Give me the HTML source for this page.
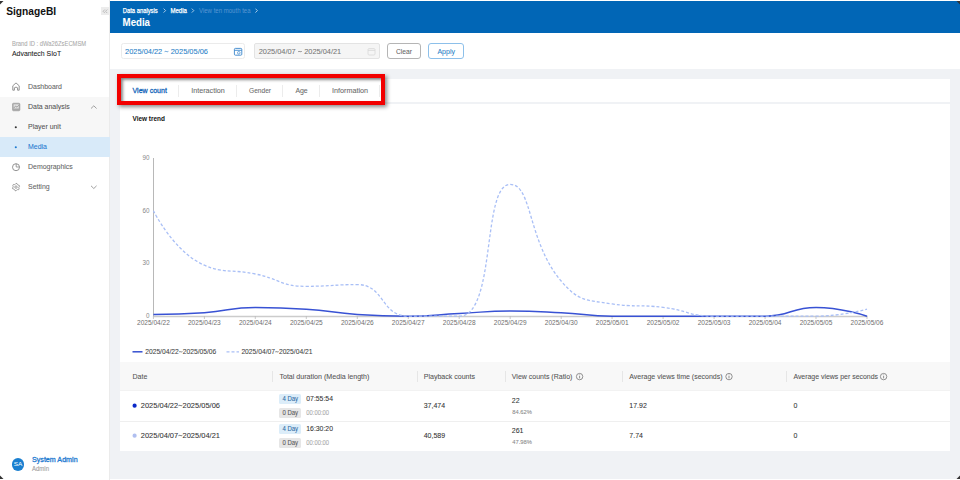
<!DOCTYPE html>
<html><head><meta charset="utf-8">
<style>
*{margin:0;padding:0;box-sizing:border-box}
html,body{width:960px;height:480px;overflow:hidden;background:#fff;font-family:"Liberation Sans",sans-serif;color:#333}
#side{position:absolute;left:0;top:0;width:110px;height:480px;background:#fff;border-right:1px solid #e8e8e8}
#main{position:absolute;left:110px;top:0;width:850px;height:480px;background:#f0f2f5}
#hdr{position:absolute;left:110px;top:1px;width:850px;height:31px;background:#0166b6}
#filt{position:absolute;left:110px;top:32px;width:850px;height:37px;background:#fff}
.card{position:absolute;background:#fff}
.t{position:absolute;white-space:nowrap;line-height:1}
svg text{font-family:"Liberation Sans",sans-serif}
</style></head><body>
<div style="position:absolute;left:0px;top:0px;width:110px;height:480px;background:#fff;border-right:1px solid #ebebeb"></div>
<div style="position:absolute;left:110px;top:1px;width:850px;height:478px;background:#f0f2f5;"></div>
<div style="position:absolute;left:110px;top:1px;width:850px;height:32px;background:#0166b6;"></div>
<div style="position:absolute;left:110px;top:33px;width:850px;height:36px;background:#fff;"></div>
<div style="position:absolute;left:0px;top:97px;width:109px;height:40px;background:#f7f7f7;"></div>
<div style="position:absolute;left:0px;top:137px;width:110px;height:20px;background:#d8eaf9;"></div>
<div style="position:absolute;left:101.2px;top:7px;width:7.6px;height:8.1px;background:#ececec;"></div>
<div style="position:absolute;left:12px;top:458.4px;width:12.2px;height:12.2px;background:#1a7fd0;border-radius:50%"></div>
<div style="position:absolute;left:121.3px;top:43.4px;width:124px;height:15.2px;background:#fff;border:1px solid #ebebeb;border-radius:2.5px"></div>
<div style="position:absolute;left:254px;top:43px;width:125.5px;height:16px;background:#f5f5f5;border:1px solid #e3e3e3;border-radius:2px"></div>
<div style="position:absolute;left:387.3px;top:43.2px;width:33.6px;height:16px;background:#fff;border:1.2px solid #b5b5b5;border-radius:3px"></div>
<div style="position:absolute;left:428.4px;top:43px;width:35.4px;height:16px;background:#fff;border:1.2px solid #8dc0ea;border-radius:3px"></div>
<div style="position:absolute;left:120px;top:79px;width:830px;height:23px;background:#fff;"></div>
<div style="position:absolute;left:120px;top:104px;width:830px;height:347px;background:#fff;"></div>
<div style="position:absolute;left:120px;top:362px;width:830px;height:28px;background:#f8f8f8;"></div>
<div style="position:absolute;left:120px;top:390px;width:830px;height:1px;background:#f2f2f2;"></div>
<div style="position:absolute;left:120px;top:420.5px;width:830px;height:1px;background:#efefef;"></div>
<div style="position:absolute;left:272.0px;top:371px;width:1px;height:11px;background:#e6e6e6;"></div>
<div style="position:absolute;left:416.5px;top:371px;width:1px;height:11px;background:#e6e6e6;"></div>
<div style="position:absolute;left:505.0px;top:371px;width:1px;height:11px;background:#e6e6e6;"></div>
<div style="position:absolute;left:622.3px;top:371px;width:1px;height:11px;background:#e6e6e6;"></div>
<div style="position:absolute;left:786.3px;top:371px;width:1px;height:11px;background:#e6e6e6;"></div>
<div style="position:absolute;left:178.0px;top:85.4px;width:1px;height:11.2px;background:#ececec;"></div>
<div style="position:absolute;left:236.0px;top:85.4px;width:1px;height:11.2px;background:#ececec;"></div>
<div style="position:absolute;left:282.3px;top:85.4px;width:1px;height:11.2px;background:#ececec;"></div>
<div style="position:absolute;left:318.9px;top:85.4px;width:1px;height:11.2px;background:#ececec;"></div>
<div style="position:absolute;left:379.0px;top:85.4px;width:1px;height:11.2px;background:#ececec;"></div>
<div style="position:absolute;left:279.25px;top:394.25px;width:22px;height:9.5px;background:#dcedf9;border-radius:1.5px"></div>
<div style="position:absolute;left:279.25px;top:408px;width:22px;height:9.5px;background:#e6e6e6;border-radius:1.5px"></div>
<div style="position:absolute;left:279.25px;top:424.25px;width:22px;height:9.5px;background:#dcedf9;border-radius:1.5px"></div>
<div style="position:absolute;left:279.25px;top:438px;width:22px;height:9.5px;background:#e6e6e6;border-radius:1.5px"></div>
<svg style="position:absolute;left:0;top:0" width="960" height="480" viewBox="0 0 960 480">
<text x="6.20" y="15" font-size="10.6" fill="#111" font-weight="bold"  textLength="50" lengthAdjust="spacingAndGlyphs">SignageBI</text>
<path d="M104.9 9.5 L103.1 11.3 L104.9 13.1 M107.3 9.5 L105.5 11.3 L107.3 13.1" fill="none" stroke="#a0a0a0" stroke-width="0.65"/>
<text x="12.00" y="46" font-size="6.4" fill="#aaaaaa" stroke="#aaaaaa" stroke-width="0.07"  textLength="74.2" lengthAdjust="spacingAndGlyphs">Brand ID : dWa26ZsECMSM</text>
<text x="12.00" y="56" font-size="7.45" fill="#222" stroke="#222" stroke-width="0.07"  textLength="49.1" lengthAdjust="spacingAndGlyphs">Advantech SIoT</text>
<text x="28.00" y="89" font-size="7.51" fill="#666" stroke="#666" stroke-width="0.07"  textLength="34.0" lengthAdjust="spacingAndGlyphs">Dashboard</text>
<text x="28.00" y="109" font-size="7.51" fill="#555" stroke="#555" stroke-width="0.07"  textLength="41.72" lengthAdjust="spacingAndGlyphs">Data analysis</text>
<text x="28.00" y="129" font-size="7.51" fill="#555" stroke="#555" stroke-width="0.07"  textLength="32.84" lengthAdjust="spacingAndGlyphs">Player unit</text>
<text x="28.00" y="149" font-size="7.51" fill="#1f7ad0" stroke="#1f7ad0" stroke-width="0.07"  textLength="18.93" lengthAdjust="spacingAndGlyphs">Media</text>
<text x="28.00" y="169" font-size="7.51" fill="#666" stroke="#666" stroke-width="0.07"  textLength="44.81" lengthAdjust="spacingAndGlyphs">Demographics</text>
<text x="28.00" y="189" font-size="7.51" fill="#666" stroke="#666" stroke-width="0.07"  textLength="21.64" lengthAdjust="spacingAndGlyphs">Setting</text>
<path d="M12.8 90.2 V85.8 L16 82.9 L19.2 85.8 V90.2 H17.6 V87.8 Q16 86.4 14.4 87.8 V90.2 Z" fill="none" stroke="#888" stroke-width="0.9" stroke-linejoin="round"/>
<rect x="12.5" y="103.2" width="7.4" height="7.6" rx="1" fill="#a8a8a8" stroke="#999" stroke-width="0.6"/>
<rect x="13.6" y="104.3" width="5.2" height="4.2" fill="#e0e0e0"/>
<path d="M13.8 108 L15.6 106 L17 107.2 L18.8 105.2" fill="none" stroke="#888" stroke-width="0.7"/>
<path d="M91 108.5 L93.8 105.8 L96.6 108.5" fill="none" stroke="#888" stroke-width="0.8"/>
<circle cx="15.8" cy="127.2" r="1.05" fill="#333"/>
<circle cx="15.8" cy="147.2" r="1.05" fill="#1f7ad0"/>
<circle cx="16" cy="167.2" r="3.5" fill="none" stroke="#888" stroke-width="0.9"/>
<path d="M16.2 163.8 V167 H19.6" fill="none" stroke="#888" stroke-width="0.8"/>
<circle cx="16" cy="187.1" r="1.2" fill="none" stroke="#888" stroke-width="0.8"/>
<path d="M16.00 183.40 L16.96 183.53 L17.45 184.59 L18.05 185.05 L19.20 185.25 L19.57 186.14 L18.90 187.10 L18.80 187.85 L19.20 188.95 L18.62 189.72 L17.45 189.61 L16.75 189.90 L16.00 190.80 L15.04 190.67 L14.55 189.61 L13.95 189.15 L12.80 188.95 L12.43 188.06 L13.10 187.10 L13.20 186.35 L12.80 185.25 L13.38 184.48 L14.55 184.59 L15.25 184.30 Z" fill="none" stroke="#888" stroke-width="0.8" stroke-linejoin="round"/>
<path d="M91 185.8 L93.8 188.5 L96.6 185.8" fill="none" stroke="#888" stroke-width="0.8"/>
<text x="13.70" y="466" font-size="5.6" fill="#fff"  textLength="8.6" lengthAdjust="spacingAndGlyphs">SA</text>
<text x="32.00" y="462" font-size="7.1" fill="#1f7ad0" stroke="#1f7ad0" stroke-width="0.3"  textLength="45.6" lengthAdjust="spacingAndGlyphs">System Admin</text>
<text x="32.00" y="471" font-size="6.48" fill="#999" stroke="#999" stroke-width="0.07"  textLength="17.01" lengthAdjust="spacingAndGlyphs">Admin</text>
<text x="122.75" y="13" font-size="6.9" fill="#fff" stroke="#fff" stroke-width="0.25"  textLength="35" lengthAdjust="spacingAndGlyphs">Data analysis</text>
<path d="M163.6 8.6 L165.6 10.6 L163.6 12.6 M191.8 8.6 L193.8 10.6 L191.8 12.6 M255.4 8.6 L257.4 10.6 L255.4 12.6" fill="none" stroke="#d0e2f3" stroke-width="0.8"/>
<text x="170.40" y="13" font-size="6.9" fill="#fff" stroke="#fff" stroke-width="0.25"  textLength="16.5" lengthAdjust="spacingAndGlyphs">Media</text>
<text x="199.00" y="13" font-size="6.52" fill="#5a96d2"  textLength="51.6" lengthAdjust="spacingAndGlyphs">View ten mouth tea</text>
<text x="122.60" y="26" font-size="10.44" fill="#fff" stroke="#fff" stroke-width="0.07" font-weight="bold"  textLength="27.41" lengthAdjust="spacingAndGlyphs">Media</text>
<text x="125.00" y="54" font-size="8.04" fill="#2a7fc8" stroke="#2a7fc8" stroke-width="0.07"  textLength="37.26" lengthAdjust="spacingAndGlyphs">2025/04/22</text>
<text x="170.74" y="54" font-size="8.04" fill="#2a7fc8" stroke="#2a7fc8" stroke-width="0.07"  textLength="37.26" lengthAdjust="spacingAndGlyphs">2025/05/06</text>
<path d="M164.64 51.71 C165.66 50.66 167.34 52.42 168.36 51.38" fill="none" stroke="#2a7fc8" stroke-width="0.75"/>
<rect x="234.4" y="48.4" width="7.4" height="6.8" rx="1" fill="none" stroke="#3a86cc" stroke-width="0.9"/>
<line x1="234.4" y1="50.3" x2="241.8" y2="50.3" stroke="#3a86cc" stroke-width="0.9"/>
<circle cx="238.8" cy="52.8" r="1.3" fill="none" stroke="#3a86cc" stroke-width="0.7"/>
<rect x="368" y="48.6" width="7" height="6.4" rx="1" fill="none" stroke="#d8d8d8" stroke-width="0.8"/>
<line x1="368" y1="50.4" x2="375" y2="50.4" stroke="#d8d8d8" stroke-width="0.8"/>
<text x="258.70" y="54" font-size="7.99" fill="#777" stroke="#777" stroke-width="0.07"  textLength="37.03" lengthAdjust="spacingAndGlyphs">2025/04/07</text>
<text x="304.17" y="54" font-size="7.99" fill="#777" stroke="#777" stroke-width="0.07"  textLength="37.03" lengthAdjust="spacingAndGlyphs">2025/04/21</text>
<path d="M298.10 51.72 C299.12 50.68 300.78 52.44 301.80 51.39" fill="none" stroke="#777" stroke-width="0.75"/>
<text x="396.00" y="54" font-size="7.24" fill="#666" stroke="#666" stroke-width="0.07"  textLength="16.01" lengthAdjust="spacingAndGlyphs">Clear</text>
<text x="437.40" y="54" font-size="7.6" fill="#2a7fc8" stroke="#2a7fc8" stroke-width="0.07"  textLength="17.61" lengthAdjust="spacingAndGlyphs">Apply</text>
<text x="132.50" y="93" font-size="7.62" fill="#0f63b8" stroke="#0f63b8" stroke-width="0.28"  textLength="34.41" lengthAdjust="spacingAndGlyphs">View count</text>
<text x="191.25" y="93" font-size="7.74" fill="#6a6a6a" stroke="#6a6a6a" stroke-width="0.07"  textLength="33.48" lengthAdjust="spacingAndGlyphs">Interaction</text>
<text x="249.00" y="93" font-size="7.13" fill="#6a6a6a" stroke="#6a6a6a" stroke-width="0.07"  textLength="22.01" lengthAdjust="spacingAndGlyphs">Gender</text>
<text x="295.40" y="93" font-size="7.5" fill="#6a6a6a" stroke="#6a6a6a" stroke-width="0.07"  textLength="12.35" lengthAdjust="spacingAndGlyphs">Age</text>
<text x="332.00" y="93" font-size="7.8" fill="#6a6a6a" stroke="#6a6a6a" stroke-width="0.07"  textLength="36.12" lengthAdjust="spacingAndGlyphs">Information</text>
<text x="132.50" y="121" font-size="6.9" fill="#111" font-weight="bold"  textLength="32.5" lengthAdjust="spacingAndGlyphs">View trend</text>
<line x1="153.5" y1="158" x2="153.5" y2="317" stroke="#b8b8b8" stroke-width="1"/>
<line x1="153" y1="316.5" x2="867.5" y2="316.5" stroke="#cccccc" stroke-width="1.5"/>
<line x1="153.4" y1="316" x2="153.4" y2="319" stroke="#bbb" stroke-width="0.8"/>
<text x="153.40" y="325" font-size="7.07" fill="#6f6f6f" text-anchor="middle" textLength="32.78" lengthAdjust="spacingAndGlyphs">2025/04/22</text>
<line x1="204.4" y1="316" x2="204.4" y2="319" stroke="#bbb" stroke-width="0.8"/>
<text x="204.37" y="325" font-size="7.07" fill="#6f6f6f" text-anchor="middle" textLength="32.78" lengthAdjust="spacingAndGlyphs">2025/04/23</text>
<line x1="255.3" y1="316" x2="255.3" y2="319" stroke="#bbb" stroke-width="0.8"/>
<text x="255.34" y="325" font-size="7.07" fill="#6f6f6f" text-anchor="middle" textLength="32.78" lengthAdjust="spacingAndGlyphs">2025/04/24</text>
<line x1="306.3" y1="316" x2="306.3" y2="319" stroke="#bbb" stroke-width="0.8"/>
<text x="306.31" y="325" font-size="7.07" fill="#6f6f6f" text-anchor="middle" textLength="32.78" lengthAdjust="spacingAndGlyphs">2025/04/25</text>
<line x1="357.3" y1="316" x2="357.3" y2="319" stroke="#bbb" stroke-width="0.8"/>
<text x="357.29" y="325" font-size="7.07" fill="#6f6f6f" text-anchor="middle" textLength="32.78" lengthAdjust="spacingAndGlyphs">2025/04/26</text>
<line x1="408.3" y1="316" x2="408.3" y2="319" stroke="#bbb" stroke-width="0.8"/>
<text x="408.26" y="325" font-size="7.07" fill="#6f6f6f" text-anchor="middle" textLength="32.78" lengthAdjust="spacingAndGlyphs">2025/04/27</text>
<line x1="459.2" y1="316" x2="459.2" y2="319" stroke="#bbb" stroke-width="0.8"/>
<text x="459.23" y="325" font-size="7.07" fill="#6f6f6f" text-anchor="middle" textLength="32.78" lengthAdjust="spacingAndGlyphs">2025/04/28</text>
<line x1="510.2" y1="316" x2="510.2" y2="319" stroke="#bbb" stroke-width="0.8"/>
<text x="510.20" y="325" font-size="7.07" fill="#6f6f6f" text-anchor="middle" textLength="32.78" lengthAdjust="spacingAndGlyphs">2025/04/29</text>
<line x1="561.2" y1="316" x2="561.2" y2="319" stroke="#bbb" stroke-width="0.8"/>
<text x="561.17" y="325" font-size="7.07" fill="#6f6f6f" text-anchor="middle" textLength="32.78" lengthAdjust="spacingAndGlyphs">2025/04/30</text>
<line x1="612.1" y1="316" x2="612.1" y2="319" stroke="#bbb" stroke-width="0.8"/>
<text x="612.14" y="325" font-size="7.07" fill="#6f6f6f" text-anchor="middle" textLength="32.78" lengthAdjust="spacingAndGlyphs">2025/05/01</text>
<line x1="663.1" y1="316" x2="663.1" y2="319" stroke="#bbb" stroke-width="0.8"/>
<text x="663.11" y="325" font-size="7.07" fill="#6f6f6f" text-anchor="middle" textLength="32.78" lengthAdjust="spacingAndGlyphs">2025/05/02</text>
<line x1="714.1" y1="316" x2="714.1" y2="319" stroke="#bbb" stroke-width="0.8"/>
<text x="714.09" y="325" font-size="7.07" fill="#6f6f6f" text-anchor="middle" textLength="32.78" lengthAdjust="spacingAndGlyphs">2025/05/03</text>
<line x1="765.1" y1="316" x2="765.1" y2="319" stroke="#bbb" stroke-width="0.8"/>
<text x="765.06" y="325" font-size="7.07" fill="#6f6f6f" text-anchor="middle" textLength="32.78" lengthAdjust="spacingAndGlyphs">2025/05/04</text>
<line x1="816.0" y1="316" x2="816.0" y2="319" stroke="#bbb" stroke-width="0.8"/>
<text x="816.03" y="325" font-size="7.07" fill="#6f6f6f" text-anchor="middle" textLength="32.78" lengthAdjust="spacingAndGlyphs">2025/05/05</text>
<line x1="867.0" y1="316" x2="867.0" y2="319" stroke="#bbb" stroke-width="0.8"/>
<text x="867.00" y="325" font-size="7.07" fill="#6f6f6f" text-anchor="middle" textLength="32.78" lengthAdjust="spacingAndGlyphs">2025/05/06</text>
<text x="149.5" y="318" text-anchor="end" font-size="6.3" fill="#888">0</text>
<text x="149.5" y="265" text-anchor="end" font-size="6.3" fill="#888">30</text>
<text x="149.5" y="213" text-anchor="end" font-size="6.3" fill="#888">60</text>
<text x="149.5" y="160" text-anchor="end" font-size="6.3" fill="#888">90</text>
<path d="M153.40,314.44 C153.40,314.44 178.95,314.44 204.37,312.68 C229.92,310.92 229.80,307.41 255.34,307.41 C280.77,307.41 280.89,307.42 306.31,309.17 C331.86,310.93 331.74,312.68 357.29,314.44 C382.71,316.20 382.78,316.20 408.26,316.20 C433.75,316.20 433.74,314.88 459.23,313.56 C484.71,312.25 484.70,310.93 510.20,310.93 C535.68,310.93 535.71,311.37 561.17,312.68 C586.68,314.00 586.63,316.20 612.14,316.20 C637.60,316.20 637.63,316.20 663.11,316.20 C688.60,316.20 688.60,316.20 714.09,316.20 C739.57,316.20 739.76,316.20 765.06,316.20 C790.73,316.20 790.54,307.41 816.03,307.41 C841.51,307.41 867.00,316.20 867.00,316.20" fill="none" stroke="#3852d4" stroke-width="1.5"/>
<path d="M153.40,210.73 C153.40,210.73 174.27,252.55 204.37,265.22 C225.24,274.01 230.03,268.78 255.34,274.01 C281.00,279.32 280.48,286.32 306.31,286.32 C331.45,286.32 333.86,284.56 357.29,284.56 C384.84,284.56 380.70,316.20 408.26,316.20 C431.67,316.20 445.72,316.20 459.23,316.20 C496.69,316.20 481.46,184.37 510.20,184.37 C532.43,184.37 527.44,241.49 561.17,281.04 C578.41,301.26 585.52,300.05 612.14,303.90 C636.49,307.41 637.79,304.35 663.11,307.41 C688.76,310.51 688.41,316.20 714.09,316.20 C739.38,316.20 739.57,316.20 765.06,316.20 C790.54,316.20 790.66,316.20 816.03,316.20 C841.63,316.20 867.00,309.17 867.00,309.17" fill="none" stroke="#a9bff6" stroke-width="1.3" stroke-dasharray="3 2"/>
<line x1="132.5" y1="351.8" x2="142.5" y2="351.8" stroke="#3550d0" stroke-width="1.5"/>
<text x="145.20" y="354" font-size="7.25" fill="#444" stroke="#444" stroke-width="0.07"  textLength="33.59" lengthAdjust="spacingAndGlyphs">2025/04/22</text>
<text x="182.71" y="354" font-size="7.25" fill="#444" stroke="#444" stroke-width="0.07"  textLength="33.59" lengthAdjust="spacingAndGlyphs">2025/05/06</text>
<path d="M179.05 351.92 C179.99 351.07 181.51 352.51 182.45 351.65" fill="none" stroke="#444" stroke-width="0.65"/>
<line x1="226.5" y1="351.8" x2="239" y2="351.8" stroke="#aac0f6" stroke-width="1.3" stroke-dasharray="3 2"/>
<text x="241.40" y="354" font-size="7.25" fill="#444" stroke="#444" stroke-width="0.07"  textLength="33.59" lengthAdjust="spacingAndGlyphs">2025/04/07</text>
<text x="278.91" y="354" font-size="7.25" fill="#444" stroke="#444" stroke-width="0.07"  textLength="33.59" lengthAdjust="spacingAndGlyphs">2025/04/21</text>
<path d="M275.25 351.92 C276.19 351.07 277.71 352.51 278.65 351.65" fill="none" stroke="#444" stroke-width="0.65"/>
<text x="132.50" y="379" font-size="7.56" fill="#555" stroke="#555" stroke-width="0.07"  textLength="14.79" lengthAdjust="spacingAndGlyphs">Date</text>
<text x="279.40" y="379" font-size="7.67" fill="#555" stroke="#555" stroke-width="0.07"  textLength="89.99" lengthAdjust="spacingAndGlyphs">Total duration (Media length)</text>
<text x="423.70" y="379" font-size="7.61" fill="#555" stroke="#555" stroke-width="0.07"  textLength="51.34" lengthAdjust="spacingAndGlyphs">Playback counts</text>
<text x="511.80" y="379" font-size="7.56" fill="#555" stroke="#555" stroke-width="0.07"  textLength="60.56" lengthAdjust="spacingAndGlyphs">View counts (Ratio)</text>
<text x="629.30" y="379" font-size="7.56" fill="#555" stroke="#555" stroke-width="0.07"  textLength="93.24" lengthAdjust="spacingAndGlyphs">Average views time (seconds)</text>
<text x="793.40" y="379" font-size="7.48" fill="#555" stroke="#555" stroke-width="0.07"  textLength="84.62" lengthAdjust="spacingAndGlyphs">Average views per seconds</text>
<circle cx="579.6" cy="376.6" r="3.2" fill="none" stroke="#777" stroke-width="0.8"/><line x1="579.6" y1="375.8" x2="579.6" y2="378.4" stroke="#666" stroke-width="0.7"/><circle cx="579.6" cy="374.8" r="0.4" fill="#666"/>
<circle cx="729" cy="376.6" r="3.2" fill="none" stroke="#777" stroke-width="0.8"/><line x1="729" y1="375.8" x2="729" y2="378.4" stroke="#666" stroke-width="0.7"/><circle cx="729" cy="374.8" r="0.4" fill="#666"/>
<circle cx="883.6" cy="376.6" r="3.2" fill="none" stroke="#777" stroke-width="0.8"/><line x1="883.6" y1="375.8" x2="883.6" y2="378.4" stroke="#666" stroke-width="0.7"/><circle cx="883.6" cy="374.8" r="0.4" fill="#666"/>
<circle cx="134.6" cy="405.7" r="2.1" fill="#0a28c8"/>
<text x="140.75" y="408" font-size="8.08" fill="#333" stroke="#333" stroke-width="0.07"  textLength="37.44" lengthAdjust="spacingAndGlyphs">2025/04/22</text>
<text x="182.56" y="408" font-size="8.08" fill="#333" stroke="#333" stroke-width="0.07"  textLength="37.44" lengthAdjust="spacingAndGlyphs">2025/05/06</text>
<path d="M178.47 405.68 C179.52 404.73 181.23 406.33 182.28 405.38" fill="none" stroke="#333" stroke-width="0.7"/>
<text x="282.45" y="401" font-size="6.48" fill="#2b6aa3" stroke="#2b6aa3" stroke-width="0.07"  textLength="15.67" lengthAdjust="spacingAndGlyphs">4 Day</text>
<text x="282.45" y="415" font-size="6.48" fill="#555" stroke="#555" stroke-width="0.07"  textLength="15.67" lengthAdjust="spacingAndGlyphs">0 Day</text>
<text x="306.25" y="401" font-size="7.42" fill="#333" stroke="#333" stroke-width="0.07"  textLength="26.74" lengthAdjust="spacingAndGlyphs">07:55:54</text>
<text x="306.25" y="415" font-size="6.32" fill="#aaa" stroke="#aaa" stroke-width="0.07"  textLength="22.77" lengthAdjust="spacingAndGlyphs">00:00:00</text>
<text x="423.70" y="408" font-size="7.56" fill="#333" stroke="#333" stroke-width="0.07"  textLength="21.41" lengthAdjust="spacingAndGlyphs">37,474</text>
<text x="511.80" y="403" font-size="7.56" fill="#333" stroke="#333" stroke-width="0.07"  textLength="7.79" lengthAdjust="spacingAndGlyphs">22</text>
<text x="512.20" y="414" font-size="6.26" fill="#888" stroke="#888" stroke-width="0.07"  textLength="19.67" lengthAdjust="spacingAndGlyphs">84.62%</text>
<text x="629.30" y="408" font-size="7.56" fill="#333" stroke="#333" stroke-width="0.07"  textLength="17.52" lengthAdjust="spacingAndGlyphs">17.92</text>
<text x="793.40" y="408" font-size="7.56" fill="#333" stroke="#333" stroke-width="0.07"  textLength="3.89" lengthAdjust="spacingAndGlyphs">0</text>
<circle cx="134.6" cy="435.7" r="2.1" fill="#b0bff0"/>
<text x="140.75" y="438" font-size="8.08" fill="#333" stroke="#333" stroke-width="0.07"  textLength="37.44" lengthAdjust="spacingAndGlyphs">2025/04/07</text>
<text x="182.56" y="438" font-size="8.08" fill="#333" stroke="#333" stroke-width="0.07"  textLength="37.44" lengthAdjust="spacingAndGlyphs">2025/04/21</text>
<path d="M178.47 435.68 C179.52 434.73 181.23 436.33 182.28 435.38" fill="none" stroke="#333" stroke-width="0.7"/>
<text x="282.45" y="431" font-size="6.48" fill="#2b6aa3" stroke="#2b6aa3" stroke-width="0.07"  textLength="15.67" lengthAdjust="spacingAndGlyphs">4 Day</text>
<text x="282.45" y="445" font-size="6.48" fill="#555" stroke="#555" stroke-width="0.07"  textLength="15.67" lengthAdjust="spacingAndGlyphs">0 Day</text>
<text x="306.25" y="431" font-size="7.42" fill="#333" stroke="#333" stroke-width="0.07"  textLength="26.74" lengthAdjust="spacingAndGlyphs">16:30:20</text>
<text x="306.25" y="445" font-size="6.32" fill="#aaa" stroke="#aaa" stroke-width="0.07"  textLength="22.77" lengthAdjust="spacingAndGlyphs">00:00:00</text>
<text x="423.70" y="438" font-size="7.56" fill="#333" stroke="#333" stroke-width="0.07"  textLength="21.41" lengthAdjust="spacingAndGlyphs">40,589</text>
<text x="511.80" y="433" font-size="7.56" fill="#333" stroke="#333" stroke-width="0.07"  textLength="11.68" lengthAdjust="spacingAndGlyphs">261</text>
<text x="512.20" y="444" font-size="6.26" fill="#888" stroke="#888" stroke-width="0.07"  textLength="19.67" lengthAdjust="spacingAndGlyphs">47.98%</text>
<text x="629.30" y="438" font-size="7.56" fill="#333" stroke="#333" stroke-width="0.07"  textLength="13.62" lengthAdjust="spacingAndGlyphs">7.74</text>
<text x="793.40" y="438" font-size="7.56" fill="#333" stroke="#333" stroke-width="0.07"  textLength="3.89" lengthAdjust="spacingAndGlyphs">0</text>
</svg>
<div style="position:absolute;left:117px;top:74px;width:268px;height:31px;border:4px solid #f20000;box-shadow:2px 2px 4px rgba(0,0,0,0.45), inset 2px 2px 3px rgba(0,0,0,0.45)"></div>
<svg style="position:absolute;left:0;top:0" width="960" height="480"><path d="M0 1 H3.5 L0 4.5 Z" fill="#333"/><path d="M0 479 V475.5 L3.5 479 Z" fill="#333"/><path d="M960 1 V4.5 L956.5 1 Z" fill="#333"/><path d="M960 479 H956.5 L960 475.5 Z" fill="#333"/></svg>
</body></html>
